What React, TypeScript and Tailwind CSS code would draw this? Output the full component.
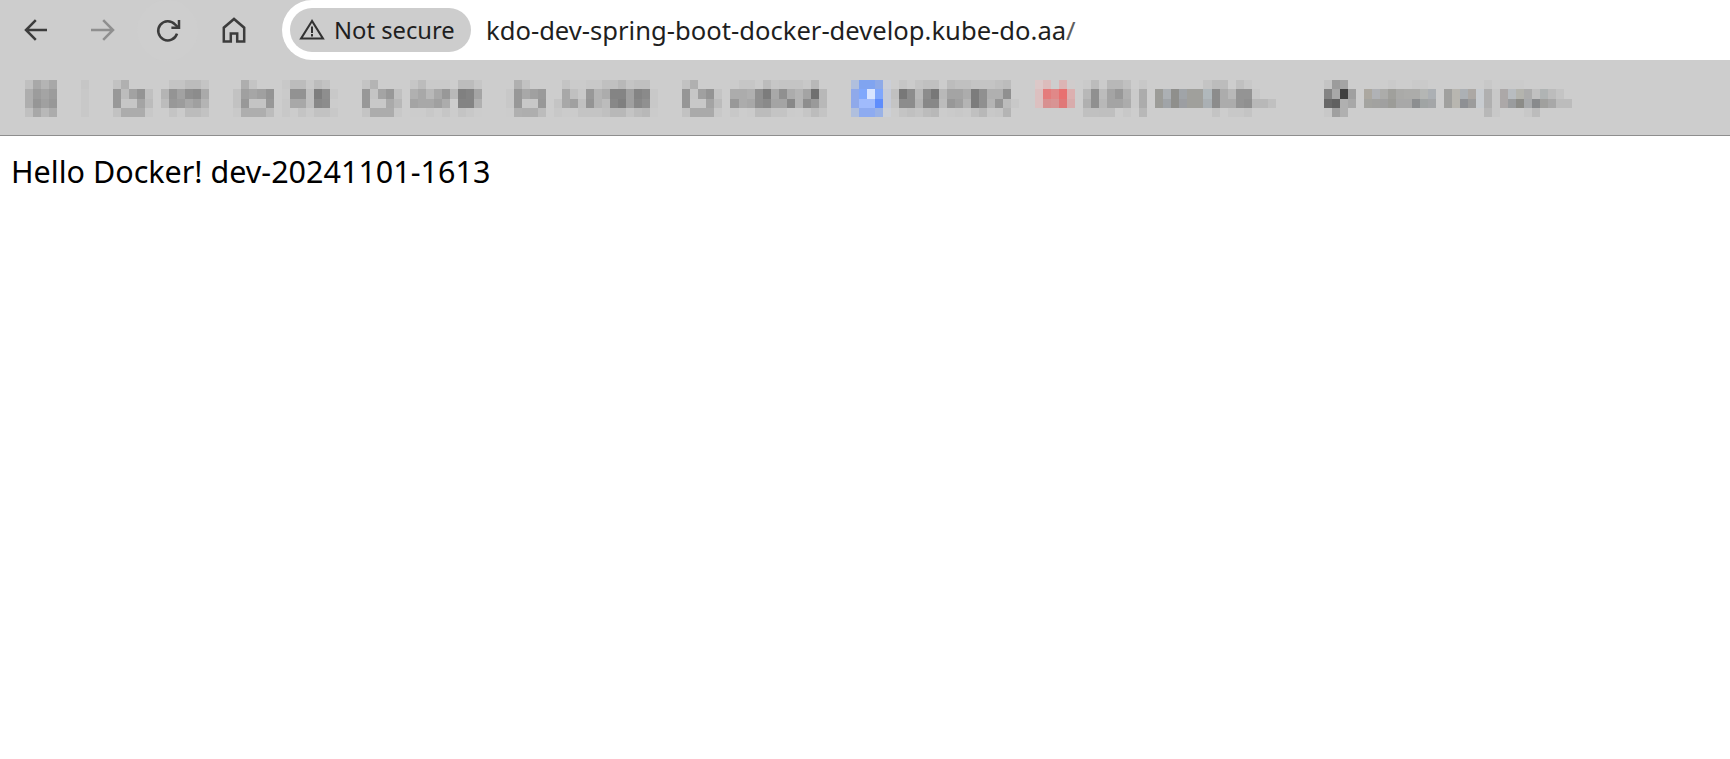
import React from "react";

type Col = [number, string, string, string, string];

const BG = "cd";
const mosaic: Col[] = [
  [0, "c0", "ae", "ae", "c0"], [1, "a8", "9c", "96", "a8"], [2, "b4", "a4", "a0", "b8"], [3, "a8", "9c", "98", "ac"],
  [7, "c6", "c8", "c8", "c8"],
  [11, "c2", "98", "98", "c2"], [12, "b0", "bc", "c6", "ac"], [13, BG, "a2", "c6", "ac"], [14, BG, "94", "a4", "ac"], [15, BG, "c0", "bc", "c8"],
  [17, BG, "b4", "bc", BG], [18, "c4", "94", "98", "c4"], [19, "c4", "a2", "9c", "cb"], [20, "bc", "90", "a8", "bc"], [21, "bc", "8c", "a0", "bc"], [22, "c4", "aa", "b4", "c2"],
  [26, BG, "c2", "c2", "c9"], [27, "ae", "a0", "98", "ae"], [28, "c4", "a6", "c4", "ae"], [29, BG, "a0", "c4", "ae"], [30, BG, "94", "98", "bc"],
  [32, "c8", "ca", "c8", "c8"], [33, "bc", "92", "a8", "cc"], [34, "bc", "92", "a8", "c4"], [35, "c8", "c0", "c0", "ca"], [36, "bc", "7e", "88", "c2"], [37, "c2", "8e", "8c", "c2"], [38, BG, "c8", "cc", "c8"],
  [42, "c4", "98", "98", "c4"], [43, "b4", "c4", "c8", "ac"], [44, BG, "a4", "c8", "ac"], [45, BG, "98", "aa", "ac"], [46, BG, "c0", "b8", "c8"],
  [48, "c6", "b0", "a4", "cc"], [49, "bc", "a8", "a8", "cc"], [50, "ca", "b8", "a8", "c8"], [51, "ca", "a8", "a0", "cc"], [52, "ca", "98", "ac", "c6"], [53, BG, "b8", BG, "cc"], [54, "bc", "80", "84", "c4"], [55, "bc", "84", "84", "c8"], [56, "c6", "a4", "b0", "cc"],
  [60, BG, "c8", "c8", "cc"], [61, "b0", "98", "98", "b0"], [62, "c2", "a8", "c8", "ae"], [63, BG, "a0", "c8", "ae"], [64, BG, "9a", "98", "bc"],
  [66, BG, BG, "c4", "c8"], [67, "c4", "a8", "a8", "cb"], [68, "cb", "c0", "a0", "cb"], [69, "cb", "c8", "c0", "c4"], [70, "c8", "98", "94", "c4"], [71, "c8", "b4", "b4", "c4"], [72, "c0", "ac", "bc", "c0"], [73, "c0", "84", "88", "b8"], [74, "b8", "84", "80", "b8"], [75, "c4", "a0", "a0", "c4"], [76, "c0", "84", "88", "bc"], [77, "c0", "8a", "90", "b8"], [78, BG, "c8", "c8", "cb"],
  [82, "c2", "96", "96", "c2"], [83, "b0", "c6", "c8", "aa"], [84, BG, "a0", "c8", "aa"], [85, BG, "94", "a4", "aa"], [86, BG, "c4", "bc", "c8"],
  [88, "cb", "ac", "98", "c8"], [89, "c6", "ac", "ac", BG], [90, "c6", "b0", "a8", "cb"], [91, "cb", "90", "90", "bc"], [92, "bc", "7c", "8a", "bc"], [93, "c6", "a8", "a4", "c4"], [94, "c4", "90", "a4", "c4"], [95, "c4", "ac", "88", "cb"], [96, "c4", "b4", "b4", "cc"], [97, "c8", "a4", "8e", "c6"], [98, "b8", "70", "9a", "bc"], [99, BG, "b8", "b8", "c4"],
  [103, "b0bfdd", "8fa9ea", "8fa9ea", "b0bfdd"], [104, "80a4f0", "80a8fc", "a0bbfc", "8eabf0"], [105, "80a4f0", "d8e4ff", "a0bbfc", "8eabf0"], [106, "8eaae8", "7fa6fc", "5f8dfc", "9ab2e6"], [107, "cbcfd8", "c6cbd8", "c6cbd8", "cdd0d6"],
  [108, BG, "c0", "c4", "cc"], [109, "c6", "78", "8c", "c4"], [110, "cb", "8c", "8c", "c0"], [111, "c4", "b8", "b4", "c4"], [112, "c0", "8c", "88", "bc"], [113, "c0", "78", "88", "b8"], [114, "cc", "b8", "bc", "cc"], [115, "bc", "a4", "98", "ca"], [116, "c0", "a4", "a0", "c8"], [117, "c0", "ac", "b4", "ca"], [118, "c4", "7c", "7c", "c0"], [119, "c4", "90", "90", "b8"], [120, "c4", "b0", "b4", "c8"], [121, "c0", "b0", "96", "c6"], [122, "bc", "90", "bc", "b4"], [123, BG, BG, "c8", BG],
  [126, "dcc8c8", "dcc0c0", "dcc0c0", BG], [127, "dcbcbc", "e47c7c", "d89090", BG], [128, BG, "e08888", "d89494", BG], [129, "dcb4b4", "e87070", "e07878", BG], [130, "d0cccc", "dcb0b0", "d8acac", BG],
  [132, "ca", "b8", "b0", "c0"], [133, "bc", "90", "90", "c0"], [134, "cb", "bc", "b8", "bf"], [135, "b8", "a4", "a4", "bf"], [136, "b8", "98", "a4", BG], [137, "c0", "b0", "ac", "c8"], [138, BG, "ca", "ca", BG], [139, "c8", "ac", "ac", "b8"],
  [141, BG, "9c9c98", "9c9c98", BG], [142, BG, "acb0b4", "a0a4a8", BG], [143, BG, "8f8f8c", "8f8f8c", BG], [144, BG, "a0a4a8", "9c9ea2", BG], [145, BG, "a0a09c", "a0a09c", BG], [146, BG, "a0a09c", "a0a09c", BG], [147, "c4", "b0b8bc", "aab0b4", BG], [148, "bc", "8c", "8c", "c4"], [149, "bc", "ac", "ac", BG], [150, BG, "b8", "ac", "c8"], [151, "c0", "94", "94", "c8"], [152, "c8", "94", "90", "c4"], [153, BG, "c8", "b8", BG], [154, BG, BG, "b8", BG], [155, BG, BG, "c0", BG],
  [162, "c4", "84", "68", "c8"], [163, "9c", "a8", "60", "a0"], [164, "a4", "40", "b0", "b0"], [165, BG, "a0", "a8", BG],
  [167, BG, "aca8a0", "a4a4a0", BG], [168, BG, "b0b2b6", "a2a2a0", BG], [169, BG, "acacaa", "a0a0a0", BG], [170, "ca", "a0a09c", "9c9c98", BG], [171, BG, "aaaaa8", "a8a8a8", BG], [172, BG, "acacaa", "a8a8a8", BG], [173, "ca", "acacaa", "8c8e90", BG], [174, "ca", "b4b6b4", "a0a4a4", BG], [175, BG, "acb0b4", "a4a6a8", BG],
  [177, BG, "a0a09e", "a0a09e", BG], [178, BG, "b8b6b0", "b8b6b0", BG], [179, BG, "acb0b4", "8e9094", BG], [180, BG, "aca8a4", "9c9c9c", BG], [181, BG, "c8ccd0", "c8ccd0", BG], [182, "c8", "b0", "b0", "b8"], [183, BG, "c8", "c8", "c8"],
  [184, "cb", "aca8a8", "aca8a8", BG], [185, "cb", "b8bcc0", "9a9c9e", BG], [186, "cb", "b4b4ae", "8c8c88", BG], [187, BG, "acacac", "a8aaac", "c8"], [188, BG, "c0", "888a8c", "bc"], [189, BG, "b0b4b4", "a0a09e", BG], [190, BG, "bc", "a8", BG], [191, BG, "c4", "bc", BG], [192, BG, BG, "bc", BG],
];

const rowY = [20, 29, 39, 48, 57];

function toFill(v: string) {
  return v.length === 2 ? `#${v}${v}${v}` : `#${v}`;
}

function Mosaic() {
  return (
    <svg width="1730" height="75" viewBox="0 0 1730 75" className="block" shapeRendering="crispEdges" aria-hidden="true">
      {mosaic.map(([k, ...cells]) => {
        const x = Math.round(25 + 8.017 * k);
        const w = Math.round(25 + 8.017 * (k + 1)) - x;
        return cells.map((c, r) =>
          c === BG ? null : <rect key={`${k}-${r}`} x={x} y={rowY[r]} width={w} height={rowY[r + 1] - rowY[r]} fill={toFill(c)} />
        );
      })}
    </svg>
  );
}

function NavIcon({ children, color, className }: { children: React.ReactNode; color: string; className: string }) {
  return (
    <svg viewBox="0 0 28 28" width="28" height="28" fill="none" stroke={color} strokeWidth="2.5" className={className} aria-hidden="true">
      {children}
    </svg>
  );
}

export default function App() {
  return (
    <div className="min-h-[759px] bg-white font-['Noto_Sans',sans-serif]">
      <header className="h-[136px] bg-[#cdcdcd] border-b border-[#8e8e8e]">
        <div className="flex h-[60px] items-center">
          <div className="flex w-[282px] shrink-0 items-center pl-[23px]">
            <NavIcon color="#3c3c3c" className="">
              <path d="M24 14H4M12.8 4.2 3 14l9.8 9.8" />
            </NavIcon>
            <NavIcon color="#8f8f8f" className="ml-[37px]">
              <path d="M3 14h20.5M15.2 4.2 25 14l-9.8 9.8" />
            </NavIcon>
            <div className="ml-[21px] flex h-[61px] w-[61px] items-center justify-center rounded-full bg-[#cecece]">
              <NavIcon color="#3c3c3c" className="">
                <path d="M23 17.6A9.6 9.6 0 1 1 21 8.4l3.4 3.2" />
                <path d="M25 4V11.8H17.4" />
              </NavIcon>
            </div>
            <NavIcon color="#3c3c3c" className="ml-[22px]">
              <path d="M3.8 25.4V11.7L14 3l10.2 8.7v13.7h-7v-8h-6.4v8z" />
            </NavIcon>
          </div>
          <div className="flex h-[60px] min-w-0 flex-1 items-center rounded-l-[30px] bg-white pl-[8px]">
            <div className="flex h-[44px] w-[181px] shrink-0 items-center rounded-full bg-[#cdcdcd] pl-[9px]">
              <svg viewBox="0 0 26 22" width="26" height="22" fill="none" stroke="#333333" strokeWidth="2" aria-hidden="true">
                <path d="M13 2 2 19.6h22z" strokeLinejoin="miter" />
                <path d="M13 7.5v6.5M13 15v2.4" />
              </svg>
              <span className="ml-[9px] pt-[2px] text-[23.75px] leading-none whitespace-nowrap text-[#1f1f1f]">Not secure</span>
            </div>
            <div className="ml-[15px] pt-[2px] text-[25.6px] leading-none whitespace-nowrap text-[#1f1f1f]">
              kdo-dev-spring-boot-docker-develop.kube-do.aa<span className="text-[#5f5f5f]">/</span>
            </div>
          </div>
        </div>
        <Mosaic />
      </header>
      <main className="px-[11px] pt-[15px] text-[30.5px] leading-[40px] text-black">Hello Docker! dev-20241101-1613</main>
    </div>
  );
}
